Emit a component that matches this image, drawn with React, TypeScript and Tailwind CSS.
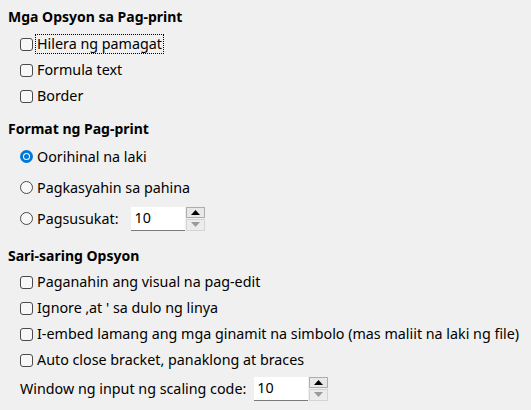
import React from "react";

const font = { fontFamily: '"Noto Sans", "Open Sans", sans-serif' };

function Check({ label, focus }: { label: string; focus?: boolean }) {
  return (
    <div className="flex items-center h-[26px] pl-[20px]">
      <span className="w-[13px] h-[13px] rounded-[3px] border border-[#4a4a4a] bg-[#f7f7f7] shrink-0" />
      <span
        className={
          "ml-[2px] px-[1px] leading-[18px] " +
          (focus ? "border border-dotted border-black" : "border border-transparent")
        }
      >
        {label}
      </span>
    </div>
  );
}

function Radio({ label, checked, children }: { label: string; checked?: boolean; children?: React.ReactNode }) {
  return (
    <div className="flex items-center h-[31px] pl-[20px]">
      {checked ? (
        <span className="w-[13px] h-[13px] rounded-full bg-[#0078d7] flex items-center justify-center shrink-0">
          <span className="w-[7px] h-[7px] rounded-full bg-white flex items-center justify-center">
            <span className="w-[5px] h-[5px] rounded-full bg-[#0078d7]" />
          </span>
        </span>
      ) : (
        <span className="w-[13px] h-[13px] rounded-full border border-[#4a4a4a] bg-[#f7f7f7] shrink-0" />
      )}
      <span className="ml-[4px]">{label}</span>
      {children}
    </div>
  );
}

function Spin({ value }: { value: string }) {
  return (
    <div className="flex h-[24px]">
      <div className="w-[54px] bg-white border-b border-[#7a7a7a] flex items-center pl-[3px]">{value}</div>
      <div className="w-[20px] flex flex-col gap-[1px] pl-[1px]">
        <div className="flex-1 border border-[#adadad] bg-[#e8e8e8] flex items-center justify-center">
          <svg width="9" height="5" viewBox="0 0 9 5"><path d="M0 5 L4.5 0 L9 5 Z" fill="#000" /></svg>
        </div>
        <div className="flex-1 border border-[#d4d4d4] bg-[#ececec] flex items-center justify-center">
          <svg width="9" height="5" viewBox="0 0 9 5"><path d="M0 0 L4.5 5 L9 0 Z" fill="#9a9a9a" /></svg>
        </div>
      </div>
    </div>
  );
}

function Heading({ children }: { children: React.ReactNode }) {
  return <div className="h-[24px] flex items-center pl-[8px] font-bold text-[14px]">{children}</div>;
}

export default function App() {
  return (
    <div
      className="w-[531px] h-[410px] bg-[#f0f0f0] text-[14.3px] text-black overflow-hidden pt-[4px]"
      style={font}
    >
      <Heading>Mga Opsyon sa Pag-print</Heading>
      <div className="mt-[3px]">
        <Check label="Hilera ng pamagat" focus />
        <Check label="Formula text" />
        <Check label="Border" />
      </div>
      <div className="mt-[7px]">
        <Heading>Format ng Pag-print</Heading>
      </div>
      <div className="mt-[1px]">
        <Radio label="Oorihinal na laki" checked />
        <Radio label="Pagkasyahin sa pahina" />
        <Radio label="Pagsusukat:">
          <div className="ml-[13px]">
            <Spin value="10" />
          </div>
        </Radio>
      </div>
      <div className="mt-[9px]">
        <Heading>Sari-saring Opsyon</Heading>
      </div>
      <div className="mt-[2px]">
        <Check label="Paganahin ang visual na pag-edit" />
        <Check label="Ignore ‚at ' sa dulo ng linya" />
        <Check label="I-embed lamang ang mga ginamit na simbolo (mas maliit na laki ng file)" />
        <Check label="Auto close bracket, panaklong at braces" />
        <div className="flex items-center h-[27px] pl-[20px] mt-[2px]">
          <span>Window ng input ng scaling code:</span>
          <div className="ml-[8px]">
            <Spin value="10" />
          </div>
        </div>
      </div>
    </div>
  );
}
